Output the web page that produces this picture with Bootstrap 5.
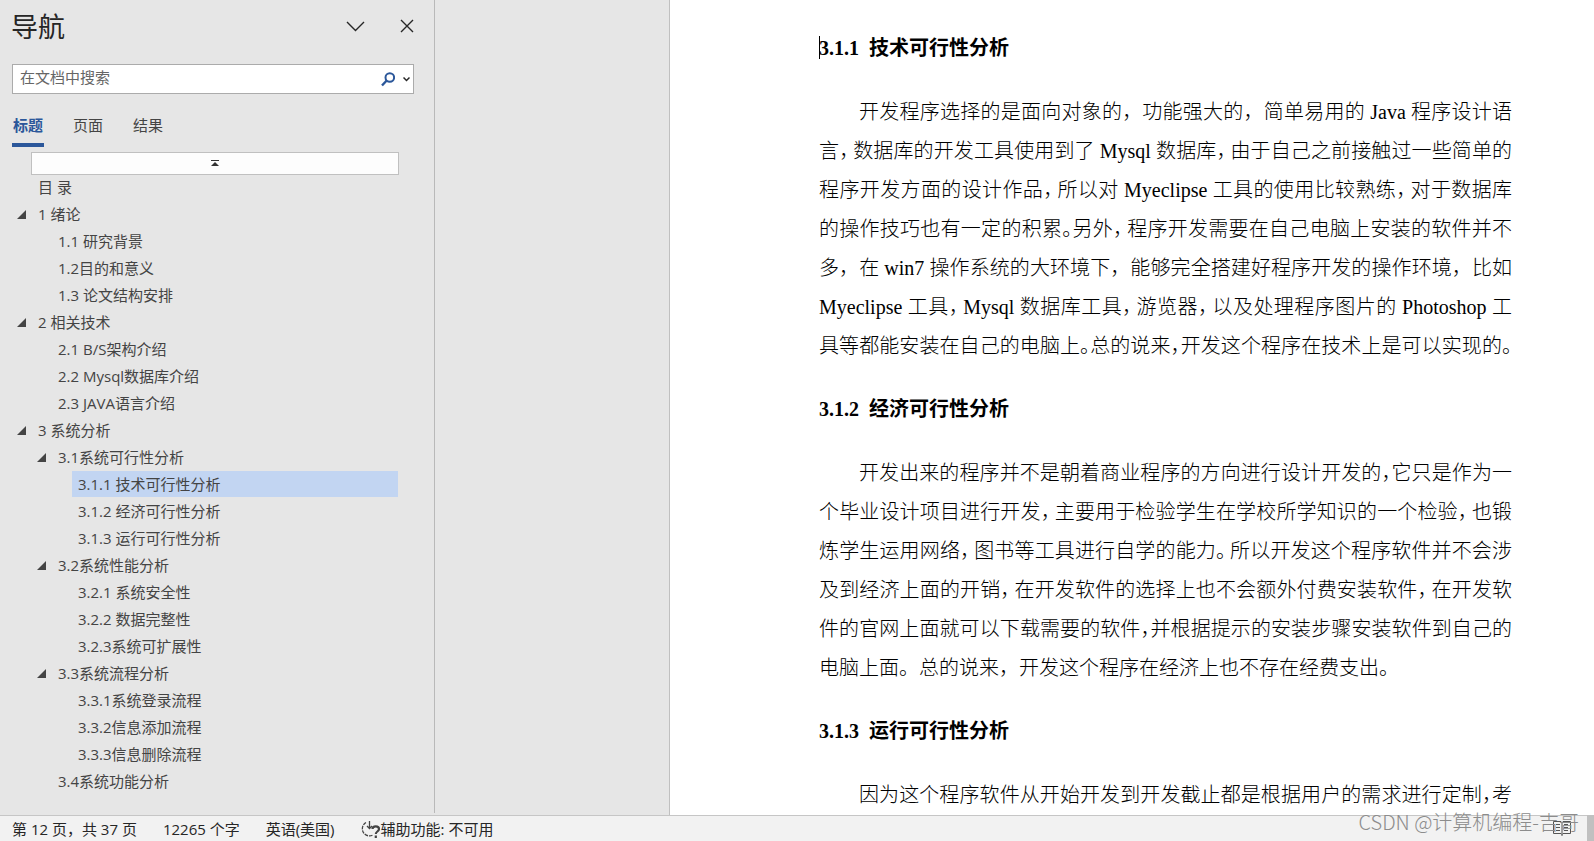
<!DOCTYPE html>
<html lang="zh-CN">
<head>
<meta charset="utf-8">
<meta name="viewport" content="width=device-width, initial-scale=1">
<title>导航</title>
<link href="https://cdn.jsdelivr.net/npm/bootstrap@5.3.0/dist/css/bootstrap.min.css" rel="stylesheet">
<script src="https://cdn.jsdelivr.net/npm/bootstrap@5.3.0/dist/js/bootstrap.bundle.min.js" defer></script>
<style>
body{font:15px/27px "Open Sans","Noto Sans CJK SC",sans-serif;font-kerning:none;color:#444;background:#e6e6e6}
a{color:inherit;text-decoration:none}
svg{display:block}
.pane{width:435px;border-right:1px solid #b9b9b9;padding:9px 20px 0 11px;margin-bottom:2px}
.pane-title{font-size:27px;line-height:36px;font-weight:400;color:#262626}
.icon-btn{background:none;border:0;padding:0;color:#262626}
.search-box{height:30px;border:1px solid #ababab;background:#fff;margin:19px 0 0 1px;padding:0 3px 0 7px}
.search-box input{border:0;outline:0;background:none;padding:0 0 4px;min-width:0;line-height:24px}
.search-box input::placeholder{color:#666;opacity:1}
.pane-tabs{margin:18px 0 0 1px;gap:28px}
.pane-tabs button{background:none;border:0;border-bottom:4px solid transparent;padding:0 1px 4px;color:#444}
.pane-tabs .active{color:#2b579a;font-weight:700;border-color:#2b579a}
.jump{height:23px;margin:5px 15px 0 20px;border:1px solid #c0c0c0;background:#fdfdfd;padding:0}
.tree{margin:-1px 16px 0 1px}
.tree a{display:block;padding-left:6px;border-bottom:1px solid transparent;background-clip:padding-box;height:27px}
.tree .active{background-color:#c2d5f2}
.twisty{width:20px;height:27px;padding:0 0 0 5px;background:none;border:0}
.lv1{padding-left:0}
.lv2{padding-left:20px}
.lv3{padding-left:40px}
.leaf{margin-left:20px}
.sheet{background:#fff;color:#000;border-left:1px solid #c0c0c0;margin-left:234px;padding:29px 82px 0 149px;font:20px/39px "Liberation Serif","Noto Sans CJK SC",serif}
.sheet h2{font:700 20px/39px "Liberation Serif","Noto Sans CJK SC",serif;margin:0 0 25px;white-space:pre}
.sheet p{font-weight:300;margin:0 0 24px}
.sheet p span{display:block;text-align-last:justify}
.sheet .first{padding-left:40px}
.sheet .tight{font-feature-settings:"halt"}
.sheet .tail{text-align-last:left}
.sheet p i{font-style:normal;margin-right:4px}
.caret{position:absolute;left:0;top:7px;width:1px;height:23px;background:#000}
.status{height:26px;border-top:1px solid #c6c6c6;background:#f2f2f2;color:#262626;line-height:26px;padding-left:12px;gap:26px;word-break:keep-all}
.corner{width:7px;background:#c0c0c0}
.stamp{position:absolute;right:15px;bottom:4px;font:300 20px/30px "Noto Sans CJK SC",sans-serif;color:#8c8c8c}
</style>
</head>
<body class="vh-100 overflow-hidden d-flex flex-column">
<div class="d-flex flex-grow-1 overflow-hidden">
<aside class="pane flex-shrink-0">
<div class="d-flex align-items-center">
<h1 class="pane-title m-0 me-auto">导航</h1>
<button class="icon-btn me-4" aria-label="选项"><svg width="38" height="18" viewBox="0 0 38 18" fill="none" stroke="currentColor" stroke-width="1.4"><path d="M9 4l8.500 8.500L26 4"/></svg></button>
<button class="icon-btn" aria-label="关闭"><svg width="14" height="18" viewBox="0 0 14 18" fill="none" stroke="currentColor" stroke-width="1.4"><path d="M1 2l12 12M13 2L1 14"/></svg></button>
</div>
<div class="search-box d-flex align-items-center">
<input class="flex-grow-1" type="text" placeholder="在文档中搜索" aria-label="在文档中搜索">
<button class="icon-btn me-2" aria-label="搜索"><svg width="14" height="15" viewBox="0 0 14 15" fill="none" stroke="#2b579a" stroke-width="2"><circle cx="8.800" cy="5.500" r="4.300"/><path d="M5.700 8.500L1 13.500" stroke-width="2.400"/></svg></button>
<button class="icon-btn" aria-label="搜索选项"><svg width="7" height="6" viewBox="0 0 7 6" fill="none" stroke="currentColor" stroke-width="1.500"><path d="M.5 1.500l3 3 3-3"/></svg></button>
</div>
<div class="pane-tabs d-flex" role="tablist">
<button class="active" role="tab" aria-selected="true">标题</button><button role="tab">页面</button><button role="tab">结果</button>
</div>
<div class="d-grid"><button class="jump d-flex justify-content-center align-items-center" aria-label="跳转到开头"><svg width="8" height="7" viewBox="0 0 8 7" fill="#333"><path d="M0 0h8v1H0zM4 2l4 4H0z"/></svg></button></div>
<nav class="tree" id="tree"></nav>
</aside>
<main class="sheet flex-grow-1">
<h2 class="position-relative"><b class="caret"></b>3.1.1  技术可行性分析</h2>
<p><span class="first">开发程序选择的是面向对象的，功能强大的，简单易用的 Java 程序设计语</span><span class="tight">言<i>，</i>数据库的开发工具使用到了 Mysql 数据库<i>，</i>由于自己之前接触过一些简单的</span><span class="tight">程序开发方面的设计作品<i>，</i>所以对 Myeclipse 工具的使用比较熟练<i>，</i>对于数据库</span><span class="tight">的操作技巧也有一定的积累。另外<i>，</i>程序开发需要在自己电脑上安装的软件并不</span><span>多，在 win7 操作系统的大环境下，能够完全搭建好程序开发的操作环境，比如</span><span class="tight">Myeclipse 工具<i>，</i>Mysql 数据库工具<i>，</i>游览器<i>，</i>以及处理程序图片的 Photoshop 工</span><span class="tight">具等都能安装在自己的电脑上。总的说来，开发这个程序在技术上是可以实现的。</span></p>
<h2>3.1.2  经济可行性分析</h2>
<p><span class="first tight">开发出来的程序并不是朝着商业程序的方向进行设计开发的，它只是作为一</span><span class="tight">个毕业设计项目进行开发<i>，</i>主要用于检验学生在学校所学知识的一个检验<i>，</i>也锻</span><span class="tight">炼学生运用网络<i>，</i>图书等工具进行自学的能力<i>。</i>所以开发这个程序软件并不会涉</span><span class="tight">及到经济上面的开销<i>，</i>在开发软件的选择上也不会额外付费安装软件<i>，</i>在开发软</span><span class="tight">件的官网上面就可以下载需要的软件，并根据提示的安装步骤安装软件到自己的</span><span class="tail">电脑上面。总的说来，开发这个程序在经济上也不存在经费支出。</span></p>
<h2>3.1.3  运行可行性分析</h2>
<p><span class="first tight">因为这个程序软件从开始开发到开发截止都是根据用户的需求进行定制，考</span></p>
</main>
</div>
<footer class="d-flex flex-shrink-0 position-relative">
<div class="status d-flex flex-grow-1">
<span>第 12 页，共 37 页</span><span>12265 个字</span><span>英语(美国)</span>
<span class="d-flex align-items-center"><svg width="20" height="20" viewBox="0 0 20 20" fill="none" stroke="#444"><path d="M5 3.500A7 7 0 1 0 12 16" stroke-width="1.300" stroke-dasharray="3.500 1"/><path d="M8.500 2v7.500M6 7l2.500 2.500L11 7" stroke-width="1.300"/><path d="M11.500 10c0-3.500 6.500-3.500 6.500 0 0 2.500-3.200 2.500-3.200 5M14.800 16.500V19" stroke-width="2.200"/></svg>辅助功能: 不可用</span>
<svg class="ms-auto me-3 mt-1" width="18" height="17" viewBox="0 0 18 17" fill="none" stroke="#555"><path d="M.5 1.500H8l1 1 1-1h7.500v12H10l-1 1-1-1H.5zM9 2v14M3 4.500h4M3 7.500h4M3 10.500h4M11 4.500h4M11 7.500h4M11 10.500h4"/></svg>
</div>
<div class="corner"></div>
<div class="stamp">CSDN @计算机编程-吉哥</div>
</footer>
<script>
// [level, title, has children, selected]
const items=[[1,"目 录"],[1,"1 绪论",1],[2,"1.1 研究背景"],[2,"1.2目的和意义"],[2,"1.3 论文结构安排"],[1,"2 相关技术",1],[2,"2.1 B/S架构介绍"],[2,"2.2 Mysql数据库介绍"],[2,"2.3 JAVA语言介绍"],[1,"3 系统分析",1],[2,"3.1系统可行性分析",1],[3,"3.1.1 技术可行性分析",0,1],[3,"3.1.2 经济可行性分析"],[3,"3.1.3 运行可行性分析"],[2,"3.2系统性能分析",1],[3,"3.2.1 系统安全性"],[3,"3.2.2 数据完整性"],[3,"3.2.3系统可扩展性"],[2,"3.3系统流程分析",1],[3,"3.3.1系统登录流程"],[3,"3.3.2信息添加流程"],[3,"3.3.3信息删除流程"],[2,"3.4系统功能分析"]];
document.getElementById("tree").innerHTML=items.map(([lv,t,kids,on])=>`<div class="d-flex lv${lv}">${kids?'<button class="twisty" aria-label="折叠"><svg width="9" height="9" viewBox="0 0 9 9" fill="#444"><path d="M9 0v9H0z"/></svg></button>':''}<a href="#" class="flex-grow-1${kids?'':' leaf'}${on?' active':''}">${t}</a></div>`).join("");
</script>
</body>
</html>
